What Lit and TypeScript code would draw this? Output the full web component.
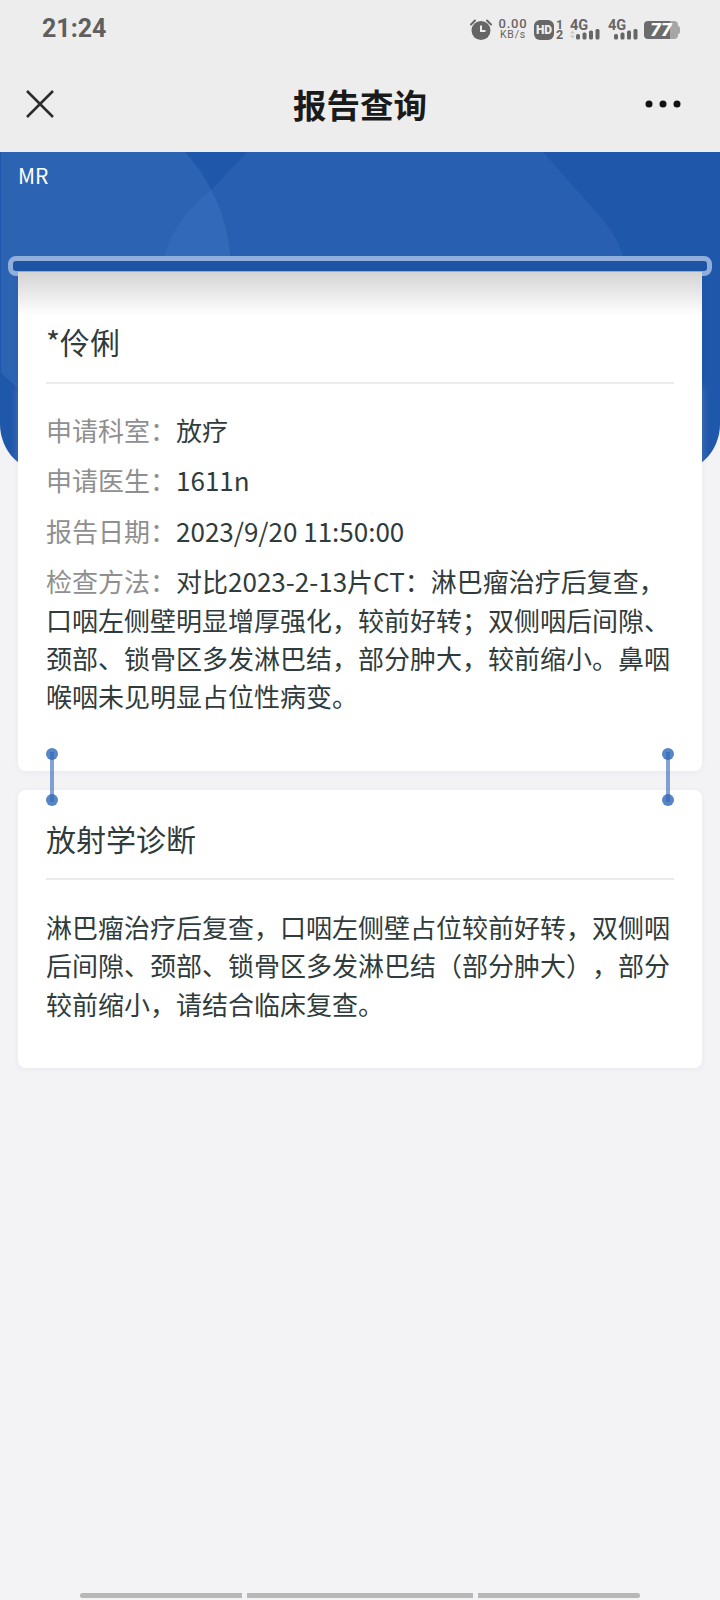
import {LitElement, css, html, svg} from "lit";
import {customElement} from "lit/decorators.js";

const details: [string, string][] = [
    ["申请科室：", "放疗"],
    ["申请医生：", "1611n"],
    ["报告日期：", "2023/9/20 11:50:00"],
    ["检查方法：", "对比2023-2-13片CT：淋巴瘤治疗后复查，口咽左侧壁明显增厚强化，较前好转；双侧咽后间隙、颈部、锁骨区多发淋巴结，部分肿大，较前缩小。鼻咽喉咽未见明显占位性病变。"],
];

const signal = (arrows: boolean) => svg`
    <svg class="signal" width="30" height="28" viewBox="0 -6 30 28">
        <text x="0" y="12" font-family="Roboto" font-weight="700" font-size="14.5" fill="#666">4G</text>
        ${arrows ? svg`<path d="M0 15.5l2.5-3 2.5 3zM0 17.5l2.5 3 2.5-3z" fill="#c8c8c8"/>` : ""}
        <rect x="6" y="16" width="4" height="5.500" rx="1.500" fill="#666"/>
        <rect x="12.500" y="14.500" width="4" height="7" rx="1.500" fill="#666"/>
        <rect x="19" y="12.500" width="4" height="9" rx="1.500" fill="#666"/>
        <rect x="25.500" y="11" width="4" height="10.500" rx="1.500" fill="#666"/>
    </svg>`;

@customElement("app-root")
export class AppRoot extends LitElement {
    render() {
        return html`
            <div class="status">
                <span class="time">21:24</span>
                <div class="status_icons">
                    <svg width="22" height="21" viewBox="0 0 22 21">
                        <circle cx="11" cy="11.500" r="9.500" fill="#666"/>
                        <path d="M11 6.500v5.500h4.500" fill="none" stroke="#eee" stroke-width="2"/>
                        <path d="M1 5.500L5 1.500M21 5.500L17 1.500" stroke="#666" stroke-width="2" stroke-linecap="round"/>
                    </svg>
                    <div class="speed"><span>0.00</span><span class="unit">KB/s</span></div>
                    <div class="hd"><span class="hd_badge">HD</span><span class="hd_nums"><span>1</span><span>2</span></span></div>
                    ${signal(true)}
                    ${signal(false)}
                    <div class="battery"><span>77</span></div>
                </div>
            </div>
            <header class="nav">
                <svg width="30" height="30" viewBox="0 0 30 30">
                    <path d="M2 2L28 28M28 2L2 28" stroke="#2b2b2b" stroke-width="2.500" fill="none"/>
                </svg>
                <h1>报告查询</h1>
                <svg class="more" width="36" height="8" viewBox="0 0 36 8">
                    <circle cx="4" cy="4" r="3.500" fill="#111"/>
                    <circle cx="18" cy="4" r="3.500" fill="#111"/>
                    <circle cx="32" cy="4" r="3.500" fill="#111"/>
                </svg>
            </header>
            <section class="hero">
                <svg class="hero_shapes" width="720" height="322" viewBox="0 0 720 322">
                    <path d="M1 0H185C212 30 231 70 231 120C231 190 190 300 100 290C60 284 30 245 1 221Z" fill="#6a96d8" fill-opacity="0.2"/>
                    <path d="M247 0H543L590 53C610 75 622 90 627 120V300H165V104C172 75 190 55 213 36Z" fill="#5a8ad8" fill-opacity="0.16"/>
                </svg>
                <span class="modality">MR</span>
            </section>
            <main class="cards">
                <div class="scan_bar"></div>
                <section class="card first">
                    <h2 class="card_title">*伶俐</h2>
                    <div class="card_body details">
                        ${details.map(([label, value]) => html`
                            <p class="row"><span class="label">${label}</span>${value}</p>
                        `)}
                    </div>
                    <i class="handle left"></i>
                    <i class="handle right"></i>
                </section>
                <section class="card second">
                    <h2 class="card_title">放射学诊断</h2>
                    <div class="card_body">
                        <p class="row">淋巴瘤治疗后复查，口咽左侧壁占位较前好转，双侧咽后间隙、颈部、锁骨区多发淋巴结（部分肿大），部分较前缩小，请结合临床复查。</p>
                    </div>
                </section>
            </main>
            <div class="gesture">
                <span class="seg one"></span>
                <span class="seg two"></span>
                <span class="seg three"></span>
            </div>
        `;
    }

    static styles = css`
      :host {
        display: block;
        position: relative;
        width: 720px;
        height: 1600px;
        overflow: hidden;
        background: #f3f3f6;
        font-family: "Noto Sans CJK SC", "Noto Sans", sans-serif;
        text-spacing-trim: space-all;
      }
      .status {
        height: 56px;
        background: #ededed;
        display: flex;
        align-items: center;
        justify-content: space-between;
        padding: 0 40px 0 42px;
      }
      .time {
        font-family: Roboto, sans-serif;
        font-weight: 700;
        font-size: 25px;
        color: #5f5f5f;
      }
      .status_icons {
        display: flex;
        align-items: flex-end;
        gap: 7px;
        height: 22px;
        margin-bottom: -1px;
      }
      .speed {
        width: 28px;
        display: flex;
        flex-direction: column;
        align-items: center;
        font-family: Roboto, sans-serif;
        font-size: 13px;
        font-weight: 500;
        line-height: 12px;
        letter-spacing: 0.8px;
        color: #666;
      }
      .speed .unit {
        font-size: 10.500px;
        font-weight: 400;
        line-height: 10px;
      }
      .hd {
        width: 28px;
        display: flex;
        gap: 2px;
      }
      .hd_badge {
        flex: none;
        width: 20px;
        height: 20px;
        border-radius: 6px;
        background: #666;
        color: #eee;
        font-family: Roboto, sans-serif;
        font-weight: 900;
        font-size: 12px;
        line-height: 20px;
        text-align: center;
      }
      .hd_nums {
        display: flex;
        flex-direction: column;
        align-items: center;
        font-family: Roboto, sans-serif;
        font-weight: 700;
        font-size: 12.500px;
        line-height: 10px;
        color: #666;
      }
      .signal {
        display: block;
        margin-left: 1px;
      }
      .battery {
        position: relative;
        width: 34px;
        height: 18px;
        margin: 0 2px 1px -1px;
        border-radius: 4px;
        background: linear-gradient(to right, #6c6c6c 76%, #a6a6a6 76%);
        color: #fff;
        font-family: Roboto, sans-serif;
        font-weight: 900;
        font-style: italic;
        font-size: 19px;
        line-height: 18px;
        text-align: center;
      }
      .battery::after {
        content: "";
        position: absolute;
        left: 34px;
        top: 5px;
        width: 2px;
        height: 8px;
        border-radius: 0 2px 2px 0;
        background: #a6a6a6;
      }
      .nav {
        height: 96px;
        background: #ededed;
        display: grid;
        grid-template-columns: 1fr auto 1fr;
        align-items: center;
        padding: 0 25px;
      }
      .nav h1 {
        margin: 0;
        font-size: 33.500px;
        font-weight: 700;
        line-height: 44px;
        color: #1a1a1a;
      }
      .nav .more {
        justify-self: end;
        margin-right: 14px;
      }
      .hero {
        position: relative;
        height: 322px;
        box-sizing: border-box;
        padding: 8px 18px;
        overflow: hidden;
        background: #1f57aa;
        border-radius: 0 0 50px 50px;
      }
      .hero_shapes {
        position: absolute;
        left: 0;
        top: 0;
      }
      .modality {
        position: relative;
        font-size: 21px;
        line-height: 30px;
        color: #fff;
      }
      .cards {
        position: relative;
        display: flex;
        flex-direction: column;
        gap: 19px;
        margin-top: -202px;
        padding: 0 18px;
      }
      .scan_bar {
        position: absolute;
        left: 8px;
        top: -16px;
        width: 704px;
        height: 20px;
        box-sizing: border-box;
        background: #1e54a6;
        border: 5px solid #92aedb;
        border-radius: 8px;
      }
      .card {
        position: relative;
        background: #fff;
        border-radius: 0 0 8px 8px;
        box-shadow: 0 1px 6px rgba(30, 50, 90, 0.05);
      }
      .card.first {
        height: 499px;
        background: linear-gradient(to bottom, #d4d4d4 0, #ffffff 44px);
      }
      .card.second {
        height: 278px;
        border-radius: 8px;
      }
      .card_title {
        margin: 0 28px;
        font-size: 30px;
        font-weight: 400;
        line-height: 44px;
        color: #303c3c;
        border-bottom: 2px solid #ebebeb;
      }
      .first .card_title {
        padding-top: 47px;
        height: 63px;
      }
      .second .card_title {
        padding-top: 26px;
        height: 62px;
      }
      .card_body {
        padding: 28px 28px 0;
      }
      .details {
        background: #fff;
        border-radius: 8px 8px 0 0;
        padding-top: 27px;
        box-shadow: 0 0 10px rgba(255, 255, 255, 0.22);
      }
      .row {
        margin: 0 0 12px;
        font-size: 26px;
        line-height: 38.400px;
        color: #303c3c;
      }
      .label {
        color: #8f8f8f;
      }
      .handle {
        position: absolute;
        top: 480px;
        width: 4px;
        height: 50px;
        background: rgba(48, 103, 184, 0.6);
        z-index: 1;
      }
      .handle::before,
      .handle::after {
        content: "";
        position: absolute;
        left: -4px;
        width: 12px;
        height: 12px;
        border-radius: 50%;
        background: rgba(48, 103, 184, 0.8);
      }
      .handle::before {
        top: -4px;
      }
      .handle::after {
        bottom: -4px;
      }
      .handle.left {
        left: 32px;
      }
      .handle.right {
        right: 32px;
      }
      .gesture {
        position: absolute;
        left: 80px;
        top: 1593px;
        display: flex;
        gap: 5px;
      }
      .seg {
        display: block;
        height: 5px;
        background: #b7b7b7;
      }
      .seg.one {
        width: 162px;
        border-radius: 3px 0 0 3px;
      }
      .seg.two {
        width: 226px;
      }
      .seg.three {
        width: 162px;
        border-radius: 0 3px 3px 0;
      }
    `;
}
